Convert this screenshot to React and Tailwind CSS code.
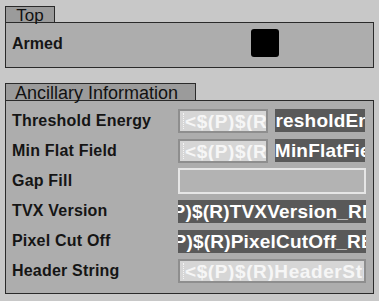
import React from "react";

const font = { fontFamily: '"Liberation Sans", Arial, sans-serif' };

function Label({ children }) {
  return (
    <div className="w-[166px] shrink-0 text-[16px] font-bold text-[#151515] leading-none whitespace-nowrap tracking-[0.2px]">
      {children}
    </div>
  );
}

function LightBox({ text, className = "" }) {
  return (
    <div
      className={`h-[24px] shrink-0 min-w-0 border-2 border-[#8e8e8e] bg-[#d6d6d6] overflow-hidden flex items-center pl-[3px] ${className}`}
    >
      <div className="w-px h-[16px] border-l border-dotted border-[#f4f4f4] mr-[1px] shrink-0" />
      <span className="shrink-0 text-[19px] font-bold text-[#f6f6f6] leading-none whitespace-nowrap tracking-[0.6px]">
        {text}
      </span>
    </div>
  );
}

function DarkBox({ text, className = "" }) {
  return (
    <div
      className={`h-[23px] shrink-0 min-w-0 bg-[#595959] overflow-hidden flex items-center justify-center ${className}`}
    >
      <span className="shrink-0 text-[19px] font-bold text-white leading-none whitespace-nowrap tracking-[0.2px]">
        {text}
      </span>
    </div>
  );
}

export default function App() {
  return (
    <div
      style={font}
      className="w-[379px] h-[301px] bg-[#c8c8c8] pl-[5px] pt-[6px] overflow-hidden"
    >
      {/* Top */}
      <div className="w-[369px]">
        <div className="w-[50px] h-[17px] border border-[#2a2a2a] bg-[#9b9b9b] flex items-center justify-center">
          <span className="text-[17px] leading-none text-[#111] mt-[1px]">Top</span>
        </div>
        <div className="-mt-px h-[46px] border border-[#2a2a2a] bg-[#adadad] flex items-center pl-[6px]">
          <div className="w-[239px] shrink-0 text-[16px] font-bold text-[#151515] leading-none mt-[-2px]">
            Armed
          </div>
          <div className="w-[28px] h-[28px] shrink-0 rounded-[3px] bg-black mt-[-4px]" />
        </div>
      </div>

      {/* Ancillary */}
      <div className="w-[369px] mt-[15px]">
        <div className="w-[191px] h-[18px] border border-[#2a2a2a] bg-[#9b9b9b] flex items-center pl-[9px]">
          <span className="text-[18px] leading-none text-[#111] whitespace-nowrap mt-[1px]">
            Ancillary Information
          </span>
        </div>
        <div className="-mt-px h-[194px] border border-[#2a2a2a] bg-[#adadad] pl-[6px] pt-[5px]">
          <div className="flex items-center h-[30px]">
            <Label>Threshold Energy</Label>
            <div className="flex gap-[7px] shrink-0">
              <LightBox text="<$(P)$(R)ThresholdEnergy>" className="w-[90px]" />
              <DarkBox text="$(P)$(R)ThresholdEnergy_RBV" className="w-[90px]" />
            </div>
          </div>
          <div className="flex items-center h-[30px]">
            <Label>Min Flat Field</Label>
            <div className="flex gap-[7px] shrink-0">
              <LightBox text="<$(P)$(R)MinFlatField>" className="w-[90px]" />
              <DarkBox text="$(P)$(R)MinFlatField_RBV" className="w-[90px]" />
            </div>
          </div>
          <div className="flex items-center h-[30px]">
            <Label>Gap Fill</Label>
            <div className="w-[188px] h-[26px] shrink-0 border-2 border-[#e6e6e6] bg-[#b3b3b3]" />
          </div>
          <div className="flex items-center h-[30px]">
            <Label>TVX Version</Label>
            <DarkBox text="$(P)$(R)TVXVersion_RBV" className="w-[188px]" />
          </div>
          <div className="flex items-center h-[30px]">
            <Label>Pixel Cut Off</Label>
            <DarkBox text="$(P)$(R)PixelCutOff_RBV" className="w-[188px]" />
          </div>
          <div className="flex items-center h-[30px]">
            <Label>Header String</Label>
            <LightBox text="<$(P)$(R)HeaderString>" className="w-[188px]" />
          </div>
        </div>
      </div>
    </div>
  );
}
